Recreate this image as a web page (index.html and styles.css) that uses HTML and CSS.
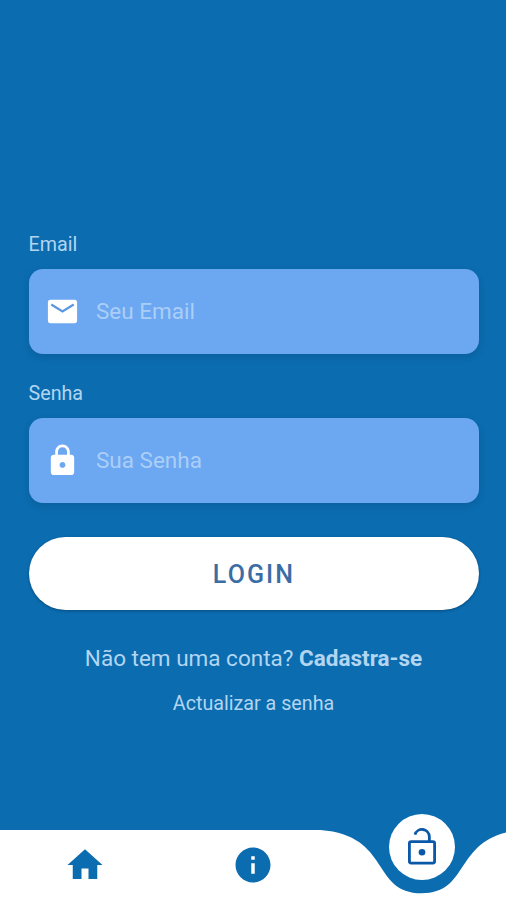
FILE: index.html
```html
<!DOCTYPE html>
<html lang="pt">
<head>
  <meta charset="UTF-8">
  <meta name="viewport" content="width=device-width, initial-scale=1.0">
  <title>Login</title>
  <link rel="stylesheet" href="styles.css">
</head>
<body>
  <main>
    <form class="login-form">
      <label for="email">Email</label>
      <div class="field">
        <svg viewBox="0 0 24 24"><rect x="2" y="4" width="20" height="16" rx="1.800"/><path class="flap" d="M4.300 7.200L12 12l7.700-4.800"/></svg>
        <input type="email" id="email" placeholder="Seu Email">
      </div>

      <label for="password">Senha</label>
      <div class="field">
        <svg viewBox="0 0 24 24"><path d="M18 8h-1V6c0-2.760-2.240-5-5-5S7 3.240 7 6v2H6c-1.100 0-2 .9-2 2v10c0 1.100.9 2 2 2h12c1.100 0 2-.9 2-2V10c0-1.100-.9-2-2-2zm-6 9c-1.100 0-2-.9-2-2s.9-2 2-2 2 .9 2 2-.9 2-2 2zm3.100-9H8.900V6c0-1.710 1.390-3.100 3.100-3.100s3.100 1.390 3.100 3.100v2z"/></svg>
        <input type="password" id="password" placeholder="Sua Senha">
      </div>

      <button type="button" class="login-btn">LOGIN</button>
    </form>

    <p class="signup">Não tem uma conta? <b>Cadastra-se</b></p>
    <p class="update">Actualizar a senha</p>
  </main>

  <nav>
    <svg class="nav-bg" viewBox="0 0 506 70"><path d="M0 0H320.500C391.300 5.300 371 63.300 421.700 63.300S452 5.300 522.900 0V70H0Z"/></svg>
    <a class="nav-item">
      <svg viewBox="0 0 24 24"><path d="M10 20v-6h4v6h5v-8h3L12 3 2 12h3v8z"/></svg>
    </a>
    <a class="nav-item">
      <svg viewBox="0 0 24 24"><path d="M12 2C6.480 2 2 6.480 2 12s4.480 10 10 10 10-4.480 10-10S17.520 2 12 2zm1 15h-2v-6h2v6zm0-8h-2V7h2v2z"/></svg>
    </a>
    <a class="nav-item active">
      <span class="bubble">
        <svg viewBox="0 0 24 24">
          <rect class="line" x="4.800" y="8.900" width="14.400" height="12.300" rx="1"/>
          <path class="line" d="M16.200 8.900V6A4.200 4.200 0 0 0 8 4.900"/>
          <circle cx="12" cy="15" r="1.900"/>
        </svg>
      </span>
    </a>
  </nav>
</body>
</html>
```

FILE: styles.css
```css
* { box-sizing: border-box; margin: 0; padding: 0; }
body { height: 900px; display: flex; flex-direction: column; overflow: hidden; font-family: Roboto, sans-serif; background-color: #0b6cb0; color: #b2d5f1; }
main { flex: 1; padding: 231px 27.5px 0 28.5px; }
.login-form { display: flex; flex-direction: column; }
label { height: 28px; line-height: 28px; font-size: 19.7px; margin-bottom: 10px; }
.field { height: 84.5px; display: flex; align-items: center; padding: 0 16.5px; margin-bottom: 26.5px; border-radius: 14px; background-color: #6ca8f1; box-shadow: 0 3px 8px rgba(0, 0, 0, 0.12); }
.field svg { width: 35px; height: 35px; fill: white; }
.field .flap { fill: none; stroke: #5b98e2; stroke-width: 1.6; }
.field input { flex: 1; min-width: 0; margin-left: 16px; border: none; outline: none; background: none; font-family: inherit; font-size: 22.5px; color: white; }
.field input::placeholder { color: #abcef8; opacity: 1; }
.login-btn { height: 73px; margin-top: 8px; padding: 1px 0 0 1px; border: none; border-radius: 37px; background-color: white; color: #3a6da4; font-family: inherit; font-size: 25px; font-weight: 500; letter-spacing: 2.1px; cursor: pointer; box-shadow: 0 1px 3px rgba(0, 0, 0, 0.3); }
.signup { margin-top: 34px; line-height: 28px; font-size: 22.5px; text-align: center; }
.update { margin-top: 17.5px; line-height: 28px; font-size: 19.7px; text-align: center; }
nav { position: relative; height: 70px; display: flex; padding-left: 1px; }
.nav-bg { position: absolute; top: 0; left: 0; width: 506px; height: 70px; fill: white; }
.nav-item { position: relative; flex: 1; display: flex; justify-content: center; padding-top: 14px; cursor: pointer; }
.nav-item svg { width: 42px; height: 42px; fill: #0b6cb0; }
.bubble { position: absolute; top: -16px; width: 66px; height: 66px; display: flex; align-items: center; justify-content: center; border-radius: 50%; background-color: white; }
.bubble svg { fill: #0c58a8; }
.bubble .line { fill: none; stroke: #0c58a8; stroke-width: 1.6; }
```
